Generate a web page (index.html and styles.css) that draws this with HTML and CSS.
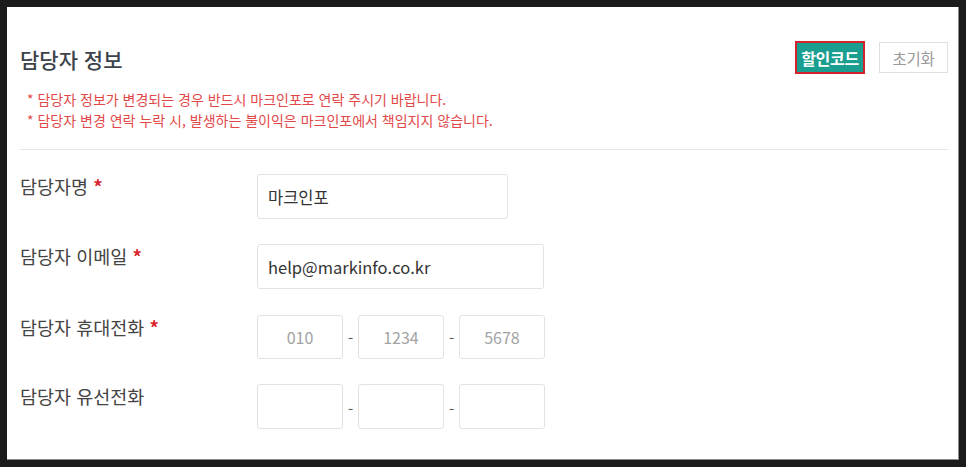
FILE: index.html
```html
<!DOCTYPE html>
<html lang="ko">
<head>
<meta charset="utf-8">
<title>담당자 정보</title>
<link rel="stylesheet" href="styles.css">
</head>
<body>
<div class="frame">
  <section class="panel">
    <header class="head">
      <h2 class="title">담당자 정보</h2>
      <div class="actions">
        <button class="btn btn-code">할인코드</button>
        <button class="btn btn-reset">초기화</button>
      </div>
    </header>
    <ul class="notes">
      <li>* 담당자 정보가 변경되는 경우 반드시 마크인포로 연락 주시기 바랍니다.</li>
      <li>* 담당자 변경 연락 누락 시, 발생하는 불이익은 마크인포에서 책임지지 않습니다.</li>
    </ul>
    <div class="form">
      <div class="row">
        <label class="label">담당자명 <span class="req">*</span></label>
        <div class="field"><input class="input input-name" type="text" value="마크인포"></div>
      </div>
      <div class="row">
        <label class="label">담당자 이메일 <span class="req">*</span></label>
        <div class="field"><input class="input input-mail" type="text" value="help@markinfo.co.kr"></div>
      </div>
      <div class="row row-tel">
        <label class="label">담당자 휴대전화 <span class="req">*</span></label>
        <div class="field phone">
          <input class="input input-tel" type="text" placeholder="010">
          <span class="dash">-</span>
          <input class="input input-tel" type="text" placeholder="1234">
          <span class="dash">-</span>
          <input class="input input-tel" type="text" placeholder="5678">
        </div>
      </div>
      <div class="row">
        <label class="label">담당자 유선전화</label>
        <div class="field phone">
          <input class="input input-tel input-tel-tall" type="text">
          <span class="dash dash-low">-</span>
          <input class="input input-tel input-tel-tall" type="text">
          <span class="dash dash-low">-</span>
          <input class="input input-tel input-tel-tall" type="text">
        </div>
      </div>
    </div>
  </section>
</div>
</body>
</html>
```

FILE: styles.css
```css
* { box-sizing: border-box; }
html, body { margin: 0; padding: 0; }
body {
  background: #1b1b1b;
  font-family: "Noto Sans CJK KR", "Noto Sans", sans-serif;
  width: 966px;
  height: 467px;
  overflow: hidden;
}
.frame {
  padding: 7px 7px 8px 7px;
  height: 467px;
}
.panel {
  background: #fff;
  width: 952px;
  height: 453px;
  border-right: 1px solid #8c8c8c;
  border-bottom: 1px solid #8c8c8c;
  padding: 34px 10px 0 13px;
}
.head {
  display: flex;
  align-items: center;
  justify-content: space-between;
  height: 33px;
}
.title {
  margin: 0;
  font-size: 21px;
  font-weight: 500;
  color: #3d434a;
  line-height: 33px;
  padding-top: 4px;
}
.actions {
  display: flex;
  align-items: center;
  gap: 14px;
}
.btn {
  font-family: "Noto Sans CJK KR", "Noto Sans", sans-serif;
  padding: 0;
  cursor: pointer;
  letter-spacing: -0.3px;
}
.btn-code {
  width: 70px;
  height: 33px;
  background: #1a9e8f;
  border: 2px solid #d3222b;
  color: #fff;
  font-weight: 700;
  font-size: 16px;
}
.btn-reset {
  width: 69px;
  height: 31px;
  background: #fff;
  border: 1px solid #e0e0e0;
  color: #9a9a9a;
  font-size: 15.5px;
}
.notes {
  list-style: none;
  margin: 15px 0 0 0;
  padding: 0 0 0 7px;
  font-size: 14px;
  line-height: 21px;
  color: #e24848;
  border-bottom: 1px solid #e6e6e6;
  padding-bottom: 18px;
}
.form {
  padding-top: 24px;
  display: flex;
  flex-direction: column;
  gap: 25px;
}
.row {
  display: flex;
  align-items: flex-start;
}
.row-tel { margin-top: 1px; }
.label {
  width: 237px;
  font-size: 18.5px;
  line-height: 24px;
  color: #444;
}
.req {
  color: #d9262e;
  font-weight: 700;
}
.field {
  display: flex;
  align-items: center;
}
.input {
  height: 45px;
  border: 1px solid #e2e2e2;
  border-radius: 3px;
  font-family: "Noto Sans CJK KR", "Noto Sans", sans-serif;
  font-size: 16.5px;
  color: #333;
  padding: 0 10px;
  outline: none;
  background: #fff;
}
.input-name { width: 251px; }
.input-mail { width: 287px; }
.input-tel {
  width: 86px;
  height: 44px;
  text-align: center;
  padding: 0;
  font-size: 16px;
}
.input-tel-tall { height: 45px; }
.input-tel::placeholder { color: #a3a3a3; }
.dash {
  width: 15px;
  text-align: center;
  font-size: 15px;
  color: #555;
}
.dash-low { padding-top: 4px; }
```
